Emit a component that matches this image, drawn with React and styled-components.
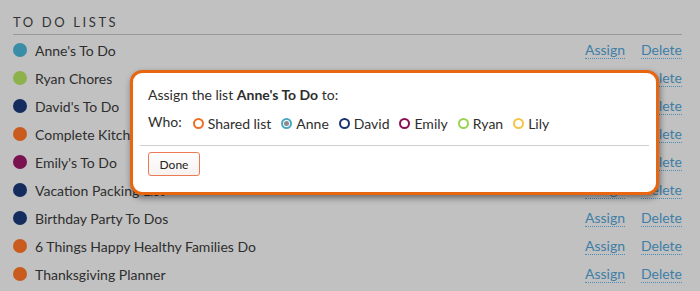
import React from 'react';
import styled, { createGlobalStyle } from 'styled-components';

const Global = createGlobalStyle`
  html, body { margin: 0; padding: 0; background: #c1c1c1; }
  body { font-family: Lato, "Open Sans", sans-serif; color: #2e2e2e; }
`;

const Page = styled.div`
  position: relative;
  width: 700px;
  height: 291px;
  overflow: hidden;
  padding: 14px 18px 0 13px;
  box-sizing: border-box;
`;

const Heading = styled.h2`
  margin: 0;
  font: 400 13px/16px Lato, sans-serif;
  letter-spacing: 2.6px;
  color: #333;
  padding-bottom: 4px;
  border-bottom: 1px solid #9a9a9a;
`;

const List = styled.ul`
  list-style: none;
  margin: 1px 0 0;
  padding: 0;
`;

const Row = styled.li`
  display: flex;
  align-items: center;
  height: 28px;
  font-size: 14px;
`;

const Dot = styled.span`
  width: 14px;
  height: 14px;
  border-radius: 50%;
  background: ${p => p.color};
  margin-right: 8px;
  flex: none;
`;

const Name = styled.span`
  flex: 1;
`;

const Actions = styled.div`
  display: flex;
  gap: 16px;
`;

const ActionLink = styled.a`
  color: #3e7ea6;
  text-decoration: none;
  border-bottom: 1px dotted #4a8cb4;
  line-height: 16px;
  cursor: pointer;
`;

const Modal = styled.div`
  position: absolute;
  left: 130px;
  top: 70px;
  width: 529px;
  height: 125px;
  box-sizing: border-box;
  background: #fff;
  border: 3px solid #e8660f;
  border-radius: 12px;
  box-shadow: 1px 3px 6px rgba(0, 0, 0, 0.45);
  padding: 13px 7px 0 7px;
`;

const Prompt = styled.p`
  margin: 0 0 0 8px;
  font-size: 14px;
  line-height: 18px;
  b { font-weight: 700; }
`;

const Who = styled.div`
  display: flex;
  align-items: center;
  margin: 9px 0 0 8px;
  font-size: 14px;
  height: 20px;
`;

const WhoLabel = styled.span`
  margin-right: 11px;
  padding-bottom: 4px;
`;

const Option = styled.label`
  display: flex;
  align-items: center;
  margin-right: 10px;
`;

const Radio = styled.span`
  width: 11px;
  height: 11px;
  box-sizing: border-box;
  border: 2px solid ${p => p.color};
  border-radius: 50%;
  margin-right: 4px;
  display: flex;
  align-items: center;
  justify-content: center;
  &::after {
    content: '';
    display: ${p => (p.checked ? 'block' : 'none')};
    width: 5px;
    height: 5px;
    border-radius: 50%;
    background: #8a8a8a;
  }
`;

const Divider = styled.hr`
  margin: 12px 0 0;
  border: 0;
  border-top: 1px solid #cfcfcf;
`;

const DoneButton = styled.button`
  margin: 6px 0 0 8px;
  width: 52px;
  height: 24px;
  font: 400 12px Lato, sans-serif;
  color: #222;
  background: linear-gradient(#fff, #f6f2f0);
  border: 1px solid #ec7a55;
  border-radius: 3px;
`;

const lists = [
  ['Anne\'s To Do', '#3a8da6'],
  ['Ryan Chores', '#8db14b'],
  ['David\'s To Do', '#152d5e'],
  ['Complete Kitchen Remodel', '#c95b1f'],
  ['Emily\'s To Do', '#7a124f'],
  ['Vacation Packing List', '#152d5e'],
  ['Birthday Party To Dos', '#152d5e'],
  ['6 Things Happy Healthy Families Do', '#c95b1f'],
  ['Thanksgiving Planner', '#c95b1f'],
];

const people = [
  ['Shared list', '#ec6f25'],
  ['Anne', '#4aa7c2', true],
  ['David', '#1b3470'],
  ['Emily', '#8a0f55'],
  ['Ryan', '#9ad152'],
  ['Lily', '#f2c447'],
];

export default function App() {
  return (
    <>
      <Global />
      <Page>
        <Heading>TO DO LISTS</Heading>
        <List>
          {lists.map(([name, color]) => (
            <Row key={name}>
              <Dot color={color} />
              <Name>{name}</Name>
              <Actions>
                <ActionLink>Assign</ActionLink>
                <ActionLink>Delete</ActionLink>
              </Actions>
            </Row>
          ))}
        </List>
        <Modal>
          <Prompt>Assign the list <b>Anne's To Do</b> to:</Prompt>
          <Who>
            <WhoLabel>Who:</WhoLabel>
            {people.map(([name, color, checked]) => (
              <Option key={name}>
                <Radio color={color} checked={checked} />
                {name}
              </Option>
            ))}
          </Who>
          <Divider />
          <DoneButton>Done</DoneButton>
        </Modal>
      </Page>
    </>
  );
}
